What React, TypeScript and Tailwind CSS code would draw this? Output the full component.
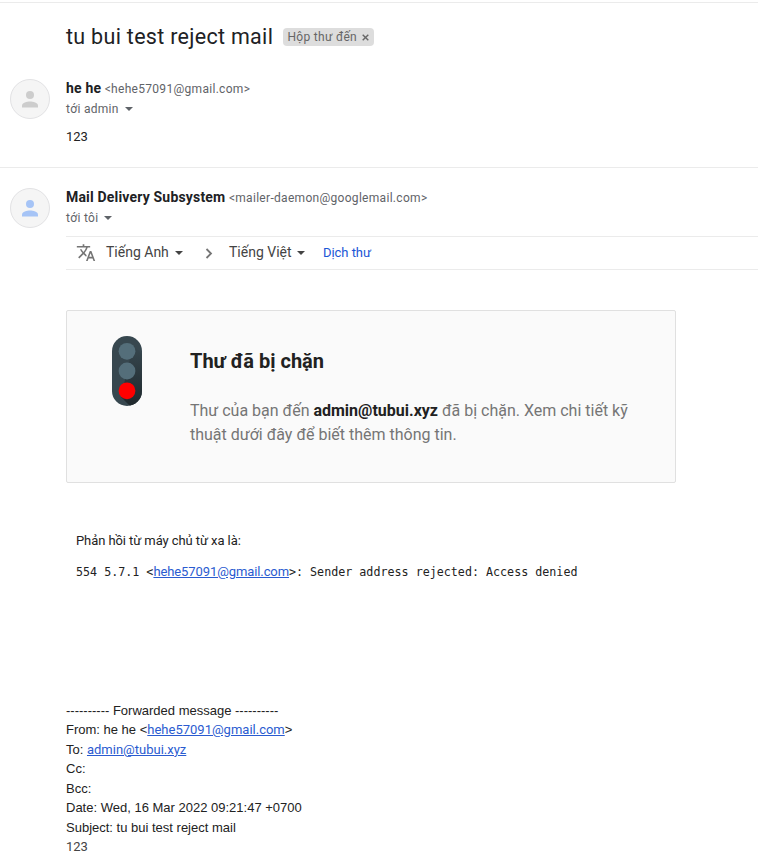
import React from 'react';

function Caret({ className = '' }: { className?: string }) {
  return (
    <svg className={`h-1 w-2 ${className}`} viewBox="0 0 8 4" fill="currentColor">
      <path d="M0 0h8L4 4z" />
    </svg>
  );
}

function Avatar({ color }: { color: string }) {
  return (
    <div className={`flex size-10 shrink-0 items-center justify-center rounded-full border border-[#e2e2e4] bg-[#f5f5f5] ${color}`}>
      <svg className="mt-px h-[17px] w-4" viewBox="0 0 16 17" fill="currentColor">
        <circle cx="8" cy="4" r="4" />
        <path d="M0 16.5v-2c0-2.8 5-4 8-4s8 1.2 8 4v2z" />
      </svg>
    </div>
  );
}

function MessageHeader({ name, email, to, color }: { name: string; email: string; to: string; color: string }) {
  return (
    <div className="flex pl-2.5">
      <Avatar color={color} />
      <div className="ml-4 whitespace-nowrap text-[#5f6368]">
        <div className="-mt-px h-[21px] text-[14px] leading-5">
          <span className="font-bold tracking-[0.18px] text-[#202124]">{name}</span>{' '}
          <span className="text-[12px] tracking-[0.3px]">&lt;{email}&gt;</span>
        </div>
        <div className="flex h-5 items-center text-[12px] leading-5 tracking-[0.3px]">
          {to}
          <Caret className="ml-1.5" />
        </div>
      </div>
    </div>
  );
}

function MailLink({ children, className = '' }: { children: React.ReactNode; className?: string }) {
  return <a className={`font-[Roboto,sans-serif] text-[13px] text-[#2a5bd0] underline ${className}`}>{children}</a>;
}

export default function App() {
  return (
    <main className="h-[859px] w-[758px] overflow-hidden bg-white pt-0.5 font-[Roboto,sans-serif] text-[#222]">
      <header className="flex h-[77px] items-start border-t border-[#ebebeb] pt-5 pl-[66px]">
        <h1 className="h-7 w-[217px] whitespace-nowrap text-[21.5px] leading-7 tracking-[0.3px] text-[#202124]">tu bui test reject mail</h1>
        <div className="mt-[5px] flex h-[18px] w-[91px] items-center rounded-[4px] bg-[#ddd] pl-[4.5px] text-[12px] tracking-[0.3px] whitespace-nowrap text-[#666]">
          Hộp thư đến
          <svg className="ml-[5px] size-[7px]" viewBox="0 0 7 7" stroke="currentColor" strokeWidth="1.4">
            <path d="M.7.7l5.6 5.6M6.3.7L.7 6.3" />
          </svg>
        </div>
      </header>

      <section className="h-[88px]">
        <MessageHeader name="he he" email="hehe57091@gmail.com" to="tới admin" color="text-[#cdcdcd]" />
        <p className="mt-2 pl-[66px] text-[13px] leading-5">123</p>
      </section>

      <section className="border-t border-[#ebebeb] pt-5">
        <MessageHeader name="Mail Delivery Subsystem" email="mailer-daemon@googlemail.com" to="tới tôi" color="text-[#a6c4f6]" />
        <div className="mt-2 ml-[66px] flex h-[34px] items-center border-y border-[#ebebeb] pl-[10px] text-[14px] whitespace-nowrap text-[#444]">
          <svg className="size-5 text-[#757575]" viewBox="0 2 24 21" fill="currentColor">
            <path d="M12.87 15.07l-2.54-2.51.03-.03A17.52 17.52 0 0 0 14.07 6H17V4h-7V2H8v2H1v1.99h11.17C11.5 7.92 10.44 9.75 9 11.35 8.07 10.32 7.3 9.19 6.69 8h-2c.73 1.63 1.73 3.17 2.98 4.56l-5.09 5.02L4 19l5-5 3.11 3.11.76-2.04zM18.5 10h-2L12 22h2l1.12-3h4.75L21 22h2l-4.5-12zm-2.62 7l1.62-4.33L19.12 17h-3.24z" />
          </svg>
          <span className="ml-[10px] w-[69px] pb-0.5">Tiếng Anh</span>
          <Caret />
          <svg className="ml-[22px] h-[11px] w-2 text-[#757575]" viewBox="0 0 8 11" fill="none" stroke="currentColor" strokeWidth="1.8">
            <path d="M1.5 1l4.5 4.5L1.5 10" />
          </svg>
          <span className="ml-4 w-[68px] pb-0.5">Tiếng Việt</span>
          <Caret />
          <a className="ml-[18px] text-[13px] tracking-[-0.05px] text-[#1a56d6]">Dịch thư</a>
        </div>
      </section>

      <section className="mt-10 ml-[66px] flex h-[173px] w-[610px] rounded-[2px] border border-[#e0e0e0] bg-[#fafafa] pt-[25px] pl-[45px]">
        <svg className="h-[70px] w-[30px] shrink-0" viewBox="0 0 30 70">
          <defs>
            <clipPath id="housing"><rect width="30" height="70" rx="15" /></clipPath>
            <linearGradient id="shade" x1="0" y1="0" x2="0" y2="1">
              <stop offset="0" stopColor="#37474f" />
              <stop offset="0.5" stopColor="#2b383e" />
              <stop offset="1" stopColor="#20292d" />
            </linearGradient>
          </defs>
          <g clipPath="url(#housing)">
            <rect width="30" height="70" fill="#37474f" />
            <path d="M21 9l9 9v52H18L9 61z" fill="url(#shade)" />
          </g>
          <circle cx="15" cy="15.3" r="8.4" fill="#546e7a" />
          <circle cx="15" cy="35" r="8.4" fill="#546e7a" />
          <circle cx="15" cy="54.8" r="8.4" fill="#f00" />
        </svg>
        <div className="ml-12 pt-[11px] whitespace-nowrap">
          <h2 className="text-[20px] leading-7 font-bold text-[#212121]">Thư đã bị chặn</h2>
          <p className="mt-6 text-[16px] leading-6 text-[#757575]">
            Thư của bạn đến <b className="text-[#212121]">admin@tubui.xyz</b> đã bị chặn. Xem chi tiết kỹ<br />
            thuật dưới đây để biết thêm thông tin.
          </p>
        </div>
      </section>

      <section className="mt-12 pl-[76px] whitespace-nowrap">
        <p className="text-[13px] leading-5 tracking-[-0.08px]">Phản hồi từ máy chủ từ xa là:</p>
        <p className="mt-[11px] font-['DejaVu_Sans_Mono',monospace] text-[11.7px] leading-5">
          554 5.7.1 &lt;<MailLink className="tracking-[-0.1px]">hehe57091@gmail.com</MailLink>&gt;: Sender address rejected: Access denied
        </p>
      </section>

      <section className="mt-[118.5px] pl-[66px] font-['Liberation_Sans',Arial,sans-serif] text-[13px] leading-[19.5px] whitespace-nowrap">
        <p>---------- Forwarded message ----------</p>
        <p>From: he he &lt;<MailLink>hehe57091@gmail.com</MailLink>&gt;</p>
        <p>To: <MailLink>admin@tubui.xyz</MailLink></p>
        <p>Cc:</p>
        <p>Bcc:</p>
        <p>Date: Wed, 16 Mar 2022 09:21:47 +0700</p>
        <p>Subject: tu bui test reject mail</p>
        <p className="font-[Roboto,sans-serif] text-[#444]">123</p>
      </section>
    </main>
  );
}
